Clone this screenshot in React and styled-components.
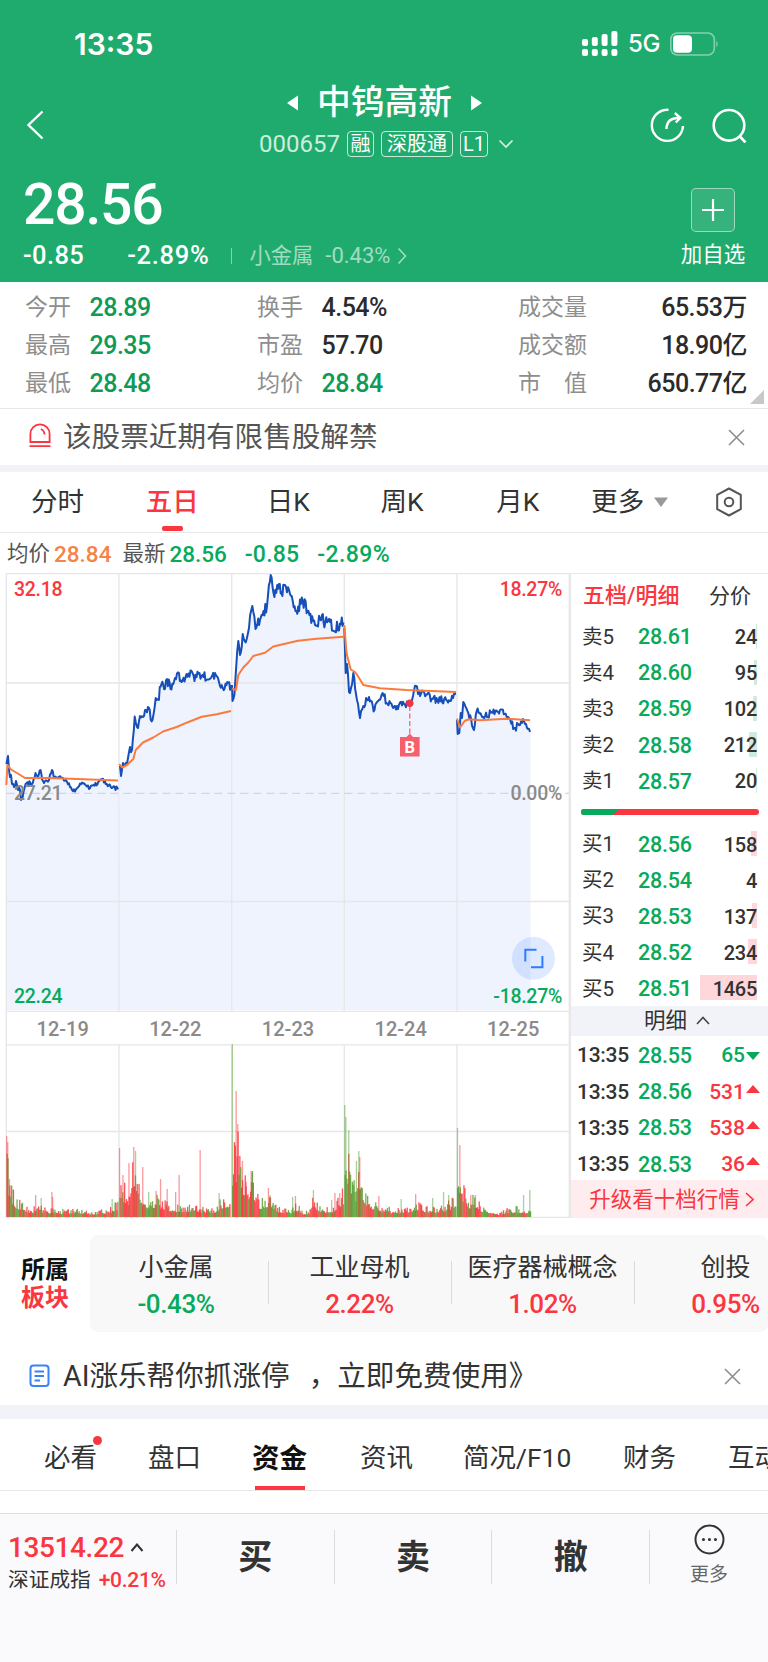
import React from 'react';
import styled, { createGlobalStyle } from 'styled-components';

const colors = {
  header: '#20ab6e',
  green: '#07aa5c',
  red: '#fa3640',
  orange: '#f5834a',
  text: '#333333',
  muted: '#8e8e8e',
  line: '#e8e8e8',
  band: '#f2f3f8',
};

const GlobalStyle = createGlobalStyle`
  * {
    box-sizing: border-box;
  }

  body {
    margin: 0;
    background: #ffffff;
    font-family: Roboto, 'Noto Sans CJK SC', sans-serif;
    line-height: 1;
    color: ${colors.text};
  }

  svg {
    display: block;
    flex: none;
  }
`;

const Screen = styled.div`
  width: 768px;
  height: 1662px;
  overflow: hidden;
  display: flex;
  flex-direction: column;
`;

const Text = styled.span`
  font-size: ${({ $size }) => $size}px;
  font-weight: ${({ $weight }) => $weight || 400};
  color: ${({ $color }) => $color || 'inherit'};
  letter-spacing: ${({ $spacing }) => $spacing || 0}px;
  word-spacing: ${({ $words }) => $words || 0}px;
  margin-left: ${({ $left }) => $left || 0}px;
  white-space: pre;
`;

const IconSlot = styled.span`
  margin-left: ${({ $left }) => $left};
`;

/* header */

const Header = styled.header`
  height: 282px;
  flex: none;
  background: ${colors.header};
  color: #ffffff;
`;

const StatusBar = styled.div`
  height: 88px;
  padding: 0 49px 0 74px;
  display: flex;
  align-items: center;
  justify-content: space-between;
  font-family: Inter, sans-serif;
`;

const StatusIcons = styled.div`
  display: flex;
  align-items: center;
  gap: 10px;
`;

const TitleBar = styled.div`
  height: 74px;
  padding: 0 21px 0 26px;
  display: grid;
  grid-template-columns: 110px 1fr 110px;
  grid-template-rows: 74px;
  align-items: center;
`;

const TitleActions = styled.div`
  display: flex;
  justify-content: flex-end;
  gap: 27px;
`;

const TitleBlock = styled.div`
  align-self: start;
  margin-top: -2px;
  display: flex;
  flex-direction: column;
  align-items: center;
`;

const TitleRow = styled.div`
  height: 34px;
  padding-right: 4px;
  display: flex;
  align-items: center;
  gap: 19px;
`;

const CodeRow = styled.div`
  height: 26px;
  margin-top: 11px;
  display: flex;
  align-items: center;
  gap: 7px;
`;

const Tag = styled.span`
  height: 26px;
  padding: 0 ${({ $pad }) => $pad}px;
  border: 1.5px solid rgba(255, 255, 255, 0.75);
  border-radius: 4px;
  display: flex;
  align-items: center;
  font-size: 20px;
`;

const PriceBlock = styled.div`
  height: 120px;
  padding: 0 23px 0 23px;
  display: flex;
  justify-content: space-between;
`;

const PriceInfo = styled.div`
  padding-top: 14px;
`;

const BigPrice = styled.div`
  height: 55px;
  font-size: 57px;
  font-weight: 500;
  letter-spacing: -1.2px;
`;

const ChangeRow = styled.div`
  height: 26px;
  margin-top: 12px;
  display: flex;
  align-items: center;
`;

const ThinDivider = styled.i`
  width: 1px;
  height: 16px;
  margin: 0 17px 0 22px;
  background: rgba(255, 255, 255, 0.45);
`;

const Watch = styled.div`
  width: 64px;
  padding-top: 26px;
  display: flex;
  flex-direction: column;
  align-items: center;
  gap: 12px;
`;

const PlusBox = styled.div`
  width: 44px;
  height: 44px;
  border: 1.5px solid rgba(255, 255, 255, 0.5);
  border-radius: 5px;
  background: rgba(255, 255, 255, 0.1);
  display: grid;
  place-items: center;
`;

/* quote stats */

const Stats = styled.section`
  height: 127px;
  padding: 7px 21px 6px 25px;
  border-bottom: 1.5px solid ${colors.line};
  flex: none;
  display: grid;
  grid-template-columns: 232px 261px 1fr;
  grid-template-rows: repeat(3, 37.7px);
  position: relative;
`;

const Stat = styled.div`
  display: flex;
  align-items: center;
`;

const StatLabel = styled.span`
  width: ${({ $wide }) => ($wide ? 69 : 46)}px;
  margin-right: ${({ $wide }) => ($wide ? 'auto' : '18.5px')};
  font-size: 23px;
  color: ${colors.muted};
  display: flex;
  justify-content: space-between;
`;

const Corner = styled.i`
  position: absolute;
  right: 4px;
  bottom: 4px;
  border-left: 14px solid transparent;
  border-bottom: 14px solid #c8c8c8;
`;

const Notice = styled.div`
  height: ${({ $height }) => $height}px;
  padding: ${({ $pad }) => $pad};
  flex: none;
  display: flex;
  align-items: center;
`;

const Band = styled.div`
  height: ${({ $height }) => $height}px;
  flex: none;
  background: ${colors.band};
`;

/* period tabs */

const PeriodTabs = styled.nav`
  height: 61px;
  padding: 0 25px 0 31px;
  flex: none;
  border-bottom: 1.5px solid ${colors.line};
  display: flex;
  align-items: stretch;
`;

const Period = styled.div`
  width: ${({ $width }) => $width}px;
  display: flex;
  align-items: center;
  font-size: 26.5px;
  font-weight: ${({ $active }) => ($active ? 500 : 400)};
  color: ${({ $active }) => ($active ? colors.red : colors.text)};
`;

const PeriodName = styled.span`
  height: 100%;
  display: flex;
  align-items: center;
  position: relative;

  &::after {
    content: '';
    display: ${({ $active }) => ($active ? 'block' : 'none')};
    position: absolute;
    left: 16px;
    bottom: 1px;
    width: 21px;
    height: 5px;
    border-radius: 2px;
    background: ${colors.red};
  }
`;

const PriceLine = styled.div`
  height: 40px;
  padding: 2px 0 0 7px;
  flex: none;
  display: flex;
  align-items: center;
`;

const Market = styled.section`
  height: 645px;
  flex: none;
  display: grid;
  grid-template-columns: 570px 198px;
`;

/* order book */

const Book = styled.aside`
  height: 645px;
  border-top: 1.5px solid ${colors.line};
  border-left: 1.5px solid ${colors.line};
`;

const BookHead = styled.div`
  height: 44px;
  padding: 0 17px 0 12px;
  display: flex;
  align-items: center;
  justify-content: space-between;
`;

const BookRow = styled.div`
  height: 36.1px;
  padding: 0 11px 0 11px;
  display: grid;
  grid-template-columns: 56px 60px 1fr;
  align-items: center;

  > span {
    padding-top: 2px;
  }
`;

const Quantity = styled.span`
  height: 25px;
  display: flex;
  align-items: center;
  justify-content: flex-end;
  font-weight: 500;
  font-size: 20px;
  letter-spacing: -0.3px;
  background: linear-gradient(${({ $tint }) => $tint}, ${({ $tint }) => $tint}) right / ${({ $bar }) => $bar}px 100% no-repeat;
`;

const RatioBar = styled.div`
  height: 27px;
  padding: 0 10px 0 10px;
  display: flex;
  align-items: center;
`;

const TradeHead = styled.div`
  height: 30px;
  padding-left: 15px;
  background: ${colors.band};
  display: flex;
  align-items: center;
  justify-content: center;
  gap: 9px;
`;

const TradeRow = styled.div`
  height: 36.1px;
  padding: 0 8px 0 6px;
  display: grid;
  grid-template-columns: 61px 56px 1fr 15px;
  align-items: center;

  > span {
    padding-top: 4px;
  }
`;

const TradeVolume = styled.span`
  text-align: right;
  font-size: 21px;
  font-weight: 500;
  color: ${({ $up }) => ($up ? colors.red : colors.green)};
`;

const TradeArrow = styled.i`
  justify-self: end;
  border: 7px solid transparent;
  border-top: ${({ $up }) => ($up ? '0' : `8px solid ${colors.green}`)};
  border-bottom: ${({ $up }) => ($up ? `8px solid ${colors.red}` : '0')};
  margin-bottom: ${({ $up }) => ($up ? 3 : -4)}px;
`;

const Upgrade = styled.div`
  height: 38px;
  padding-left: 4px;
  background: #feecee;
  color: ${colors.red};
  display: flex;
  align-items: center;
  justify-content: center;
  gap: 5px;
`;

/* sectors */

const SectorRow = styled.section`
  height: 97px;
  margin-top: 17px;
  flex: none;
  display: grid;
  grid-template-columns: 90px 1fr;
`;

const SectorLabel = styled.div`
  padding-left: 21px;
  display: flex;
  flex-direction: column;
  justify-content: center;
  gap: 4px;
`;

const SectorList = styled.div`
  border-radius: 8px;
  background: #f8f8f8;
  overflow: hidden;
  display: flex;
`;

const Sector = styled.div`
  width: 183px;
  padding: 20px 2px 0 0;
  flex: none;
  display: flex;
  flex-direction: column;
  align-items: center;
  gap: 11px;
  background: linear-gradient(#dadada, #dadada) right 26px / 1.5px 43px no-repeat;

  &:first-child {
    width: 179px;
    padding-right: 7px;
  }
`;

/* content tabs */

const ContentTabs = styled.nav`
  height: 72px;
  padding-left: 44px;
  flex: none;
  border-bottom: 1px solid ${colors.line};
  display: flex;
  overflow: hidden;
`;

const ContentTab = styled.div`
  height: 71px;
  width: ${({ $width }) => $width}px;
  flex: none;
  font-size: ${({ $active }) => ($active ? 27.5 : 26.5)}px;
  font-weight: ${({ $active }) => ($active ? 700 : 400)};
  color: ${({ $active }) => ($active ? '#111111' : colors.text)};
`;

const ContentName = styled.span`
  height: 71px;
  width: fit-content;
  padding-top: 8px;
  display: flex;
  align-items: center;
  white-space: nowrap;
  position: relative;

  &::after {
    content: '';
    display: ${({ $active }) => ($active ? 'block' : 'none')};
    position: absolute;
    left: 3px;
    right: 2px;
    bottom: 0;
    height: 4px;
    background: ${colors.red};
  }
`;

const Dot = styled.i`
  position: absolute;
  top: 17px;
  right: -5px;
  width: 9px;
  height: 9px;
  border-radius: 50%;
  background: ${colors.red};
`;

/* bottom bar */

const BottomBar = styled.footer`
  height: 149px;
  margin-top: 22px;
  padding-top: 16px;
  flex: none;
  border-top: 1.5px solid #dfdfe2;
  background: #fafafc;
  display: grid;
  grid-template-columns: 177px repeat(3, 157.7px) 1fr;
  align-items: start;
`;

const BottomCell = styled.div`
  height: 54px;
  border-right: ${({ $last }) => ($last ? '0' : '1.5px solid #dcdcde')};
  display: flex;
  align-items: center;
  justify-content: center;
`;

const IndexCell = styled(BottomCell)`
  padding: 10px 0 0 8px;
  flex-direction: column;
  align-items: flex-start;
  gap: 8px;
`;

const Inline = styled.div`
  display: flex;
  align-items: center;
`;

const MoreCell = styled(BottomCell)`
  padding-bottom: 6px;
  flex-direction: column;
  gap: 10px;
`;

const STATS = [
  ['今开', '28.89', 1], ['换手', '4.54%', 0], ['成交量', '65.53万', 0],
  ['最高', '29.35', 1], ['市盈', '57.70', 0], ['成交额', '18.90亿', 0],
  ['最低', '28.48', 1], ['均价', '28.84', 1], ['市值', '650.77亿', 0],
];

const PERIODS = [
  { name: '分时', width: 115 },
  { name: '五日', width: 121, active: true },
  { name: '日K', width: 114 },
  { name: '周K', width: 116 },
  { name: '月K', width: 95 },
];

const SELL = [
  ['卖5', '28.61', 24, 1],
  ['卖4', '28.60', 95, 3],
  ['卖3', '28.59', 102, 4],
  ['卖2', '28.58', 212, 8],
  ['卖1', '28.57', 20, 1],
];

const BUY = [
  ['买1', '28.56', 158, 6],
  ['买2', '28.54', 4, 0],
  ['买3', '28.53', 137, 5],
  ['买4', '28.52', 234, 9],
  ['买5', '28.51', 1465, 57],
];

const TRADES = [
  ['13:35', '28.55', 65, false],
  ['13:35', '28.56', 531, true],
  ['13:35', '28.53', 538, true],
  ['13:35', '28.53', 36, true],
];

const SECTORS = [
  ['小金属', '-0.43%'],
  ['工业母机', '2.22%'],
  ['医疗器械概念', '1.02%'],
  ['创投', '0.95%'],
];

const CONTENT_TABS = [
  { name: '必看', width: 104, dot: true },
  { name: '盘口', width: 104 },
  { name: '资金', width: 108, active: true },
  { name: '资讯', width: 103 },
  { name: '简况/F10', width: 160 },
  { name: '财务', width: 105 },
  { name: '互动', width: 60 },
];

const DAY_X = [6.3, 119, 231.7, 344.3, 457, 569.3];
const DATES = ['12-19', '12-22', '12-23', '12-24', '12-25'];

const PRICE = [
  [[6.5, 764], [8, 756], [9, 770], [10, 777], [11, 775], [12, 784], [14, 787], [16, 781], [18, 790], [20, 790], [21, 800], [23.5, 792], [26.7, 783], [32, 784], [35.5, 773], [38, 777], [40.5, 770], [43, 781], [49, 780], [52, 770], [53.5, 776], [61, 778], [66, 780], [70, 787], [75, 791.5], [82, 782.5], [90, 788], [102, 780], [111.5, 788], [118.5, 788]],
  [[120, 766], [121, 776], [123, 763], [128, 758], [130, 747], [132, 750], [134.7, 716.5], [137, 727], [140, 716], [143, 717], [148, 707], [152.5, 720], [155.7, 698], [158, 699], [161.5, 684], [165, 689], [167, 679], [170.5, 689], [175, 678], [179, 673], [181.5, 682], [186.5, 674], [191.5, 671], [194.5, 681], [199.5, 673], [203.5, 677], [218, 678], [220, 686], [231, 685]],
  [[232, 685], [232.5, 701], [234.5, 694], [236, 670], [238.3, 641], [240, 655], [242.7, 634], [246.7, 639], [249, 628], [252.3, 606], [255.5, 629], [260, 620], [263.5, 611], [267, 606], [270.7, 575], [273.5, 593], [279, 584], [281.5, 592], [285, 585], [290, 594], [295.5, 611], [302.7, 601], [308.5, 611], [315, 625], [322, 615], [323.5, 622], [330, 622], [334, 631], [340, 623.5], [343.5, 622.5]],
  [[344.3, 628], [345.7, 673], [347, 664], [349, 692], [351, 688], [353.3, 673], [356, 694], [360, 718], [363.3, 706], [369, 697], [374.5, 710], [382.7, 693], [386.7, 703], [395, 706], [404, 704], [409.7, 703], [413, 696], [416, 686], [420, 696], [423.3, 691], [431.7, 699], [450, 701], [454, 694], [456, 694]],
  [[457, 720], [457.7, 734], [459.3, 733], [460.7, 713], [462, 718], [463.3, 702], [468.3, 713], [474, 730], [476.7, 711], [483.3, 717], [491.7, 712], [500, 710], [506.7, 717], [515, 728], [524, 721], [530, 732]],
];

const AVERAGE = [
  '6.3,785 7.5,765 11,769.5 17,773 25,778 50,778 77,779 118,780.5',
  '119.3,764 122,767.5 127,765 133.3,759 135.7,750 143,742.5 153.3,737.5 163,731.5 176.7,727 186.7,722.7 201.7,716.7 216.7,714.3 231,711',
  '232,688.5 236,690 238.3,675 243.3,667.5 248.3,662.5 253.3,656 265,652.7 273.3,646.5 284,644 298,640.7 316.7,638.7 344,636.7',
  '344.3,625 346.5,653 350.7,669.5 355,672 358.3,676.7 363.3,685 380,688.3 406.7,690 456,692',
  '457,718.7 460,727.3 465,720.7 469,719.3 480,720.3 506.7,718.7 530,720.3',
];

// volume envelope: x, height, share of falling minutes
const VOLUME = [
  [[6.5, 70, 0.3], [9, 34, 0.7], [12, 26, 0.7], [15, 18, 0.7], [20, 13, 0.6], [30, 8, 0.5], [38, 10, 0.6], [45, 8, 0.6], [60, 6, 0.5], [75, 8, 0.6], [90, 4, 0.3], [105, 7, 0.4], [112, 9, 0.3], [118, 15, 0.4]],
  [[119.5, 38, 0.6], [123, 30, 0.4], [127, 22, 0.4], [131, 40, 0.1], [134.5, 66, 0.2], [137, 34, 0.4], [145, 18, 0.5], [155, 18, 0.5], [168, 12, 0.4], [180, 9, 0.5], [195, 11, 0.4], [205, 8, 0.5], [215, 8, 0.4], [222, 18, 0.5], [230, 20, 0.4]],
  [[232, 60, 0.5], [235, 60, 0.2], [237.5, 92, 0.2], [242, 48, 0.3], [248, 26, 0.5], [252, 38, 0.4], [258, 15, 0.5], [268, 20, 0.4], [275, 10, 0.4], [290, 7, 0.6], [296, 12, 0.4], [302, 5, 0.3], [308, 5, 0.4], [313, 18, 0.4], [320, 8, 0.4], [332, 9, 0.4], [343, 24, 0.5]],
  [[344.5, 85, 0.9], [348, 55, 0.6], [352, 36, 0.5], [356, 30, 0.7], [359, 50, 0.6], [364, 26, 0.4], [370, 16, 0.6], [380, 11, 0.3], [392, 7, 0.6], [405, 7, 0.3], [416, 14, 0.4], [428, 8, 0.6], [440, 9, 0.4], [450, 14, 0.3], [456, 22, 0.6]],
  [[457, 60, 0.8], [460, 42, 0.3], [465, 20, 0.4], [470, 17, 0.7], [476, 19, 0.5], [482, 9, 0.6], [492, 7, 0.4], [498, 3, 0.2], [506, 7, 0.5], [516, 9, 0.6], [525, 7, 0.4], [530, 10, 0.8]],
];

const SPIKES = [
  [6.5, 81, 'r'], [7.6, 75, 'r'], [9.3, 38, 'r'], [13, 28, 'g'], [35.5, 22, 'r'], [41, 19, 'g'], [51.7, 25, 'r'], [52.5, 20, 'r'], [112, 18, 'g'],
  [119.4, 69, 'r'], [122.8, 42, 'r'], [128.8, 54, 'r'], [133.6, 70, 'r'], [135.4, 66, 'g'], [142.6, 50, 'r'], [148.5, 25, 'g'], [156, 26, 'r'], [160.4, 38, 'r'], [167, 28, 'r'], [175.5, 25, 'r'], [179, 42, 'r'], [200, 67, 'r'], [219, 24, 'g'],
  [232.2, 173, 'g'], [236, 126, 'r'], [237.6, 93, 'r'], [242.3, 56, 'r'], [246, 35, 'r'], [251, 46, 'r'], [252, 44, 'g'], [268.3, 29, 'r'], [270, 22, 'g'], [292.5, 20, 'g'], [295.3, 21, 'r'], [313.3, 27, 'g'], [331.5, 17, 'g'], [334.8, 24, 'r'], [339.6, 24, 'r'],
  [344.6, 112, 'g'], [345.7, 100, 'g'], [348.6, 87, 'g'], [356.3, 56, 'g'], [358.7, 66, 'g'], [359.6, 60, 'r'], [378.7, 21, 'r'], [401, 18, 'g'], [415.5, 23, 'r'], [432.5, 19, 'g'], [443.4, 25, 'g'], [448.5, 22, 'g'],
  [457.3, 89, 'g'], [459.7, 72, 'r'], [470.6, 22, 'r'], [475.3, 22, 'r'], [523.4, 22, 'g'], [529.7, 27, 'g'],
];

const random = (seed) => {
  const value = Math.sin(seed * 12.9898 + 4.137) * 43758.5453;
  return value - Math.floor(value);
};

const sample = (points, x, column) => {
  const next = points.findIndex((p) => p[0] >= x);
  if (next <= 0) return points[next === 0 ? 0 : points.length - 1][column];
  const a = points[next - 1];
  const b = points[next];
  return a[column] + ((b[column] - a[column]) * (x - a[0])) / (b[0] - a[0]);
};

// minute ticks between the turning points of a day
const ticks = (points, day) => {
  const noise = [2.4, 5, 6, 3.8, 3.8][day];
  const out = [];
  for (let i = 0; i < points.length - 1; i += 1) {
    const [x1, y1] = points[i];
    const [x2, y2] = points[i + 1];
    const steps = Math.max(1, Math.round((x2 - x1) / 0.95));
    for (let s = 0; s < steps; s += 1) {
      const x = x1 + ((x2 - x1) * s) / steps;
      const jitter = s === 0 ? 0 : (random(x) - 0.5) * 2 * noise;
      out.push([x, y1 + ((y2 - y1) * s) / steps + jitter]);
    }
  }
  out.push(points[points.length - 1]);
  return out.map(([x, y]) => `${x.toFixed(1)},${y.toFixed(1)}`).join(' ');
};

const volumeBars = () => {
  const bars = [];
  VOLUME.forEach((points) => {
    const end = points[points.length - 1][0];
    for (let x = points[0][0]; x <= end; x += 0.9) {
      const r = random(x * 3.1);
      bars.push({
        x,
        height: Math.max(2, sample(points, x, 1) * (0.48 + 0.8 * r * r)),
        fill: random(x * 7.7) < sample(points, x, 2) ? '#57a033' : '#fb343c',
      });
    }
  });
  return bars;
};

const Chart = () => (
  <svg width="570" height="645" viewBox="0 573 570 645" fontFamily="Roboto, sans-serif">
    {PRICE.map((points, day) => {
      const right = day === 4 ? 530.5 : DAY_X[day + 1];
      return (
        <polygon
          key={day}
          fill="#eff3fe"
          points={`${DAY_X[day]},1010 ${ticks(points, day)} ${right},${points[points.length - 1][1]} ${right},1010`}
        />
      );
    })}
    <g stroke="#e5e6e8" strokeWidth="1.3" fill="none">
      <path d="M6.3 573.6H570M6.3 683H569M6.3 901.5H569M6.3 1011.3H569M6.3 1044.8H569M6.3 1131.5H569M6.3 1217.4H569" />
      {DAY_X.map((x, i) => (
        <path key={x} d={i === 0 || i === 5 ? `M${x} 573V1218` : `M${x} 573V1011M${x} 1045V1218`} />
      ))}
    </g>
    <path d="M6.3 793.3H569" stroke="#cbd8e6" strokeWidth="1.2" strokeDasharray="8 5" />
    {volumeBars().map((bar) => (
      <rect key={bar.x} x={bar.x} y={1217 - bar.height} width="1.3" height={bar.height} fill={bar.fill} opacity="0.85" />
    ))}
    {SPIKES.map(([x, height, kind]) => (
      <rect key={x} x={x - 0.5} y={1217 - height} width="1.3" height={height} fill={kind === 'g' ? '#57a033' : '#fb343c'} opacity="0.5" />
    ))}
    {PRICE.map((points, day) => (
      <polyline key={day} points={ticks(points, day)} fill="none" stroke="#164fb9" strokeWidth="2" strokeLinejoin="round" />
    ))}
    {AVERAGE.map((points) => (
      <polyline key={points} points={points} fill="none" stroke="#fb7a3d" strokeWidth="2" strokeLinejoin="round" />
    ))}
    <g fontSize="19.5" fontWeight="500" letterSpacing="-0.3">
      <text x="14" y="596" fill={colors.red}>32.18</text>
      <text x="562" y="596" fill={colors.red} textAnchor="end">18.27%</text>
      <text x="14" y="800" fill="#8a8a8a">27.21</text>
      <text x="562" y="800" fill="#8a8a8a" textAnchor="end">0.00%</text>
      <text x="14" y="1003" fill={colors.green}>22.24</text>
      <text x="562" y="1003" fill={colors.green} textAnchor="end">-18.27%</text>
    </g>
    <path d="M409.8 706V735" stroke="#f45a68" strokeWidth="1.2" strokeDasharray="5 2.5" />
    <circle cx="409.8" cy="703.3" r="3.7" fill="#f53443" />
    <path d="M400 737H406.5L409.8 733.5L413 737H419.6V756.5H400Z" fill="#f65f6c" />
    <text x="409.8" y="753" textAnchor="middle" fontSize="16.5" fontWeight="700" fill="#ffffff">B</text>
    <circle cx="533.5" cy="958.3" r="21.5" fill="#3a7cff" fillOpacity="0.16" />
    <path d="M525.3 961.5V949.8H536.5M531 967.2H542.4V956" fill="none" stroke="#2e7cff" strokeWidth="2" />
    <g fontSize="20" fontWeight="500" fill="#8a8a8a" textAnchor="middle">
      {DATES.map((date, i) => (
        <text key={date} x={(DAY_X[i] + DAY_X[i + 1]) / 2} y="1036">{date}</text>
      ))}
    </g>
  </svg>
);

const SignalIcon = () => (
  <svg width="36" height="26" viewBox="0 0 36 26" fill="#ffffff">
    {[8, 6, 3, 0].map((top, i) => (
      <React.Fragment key={top}>
        <rect x={i * 9.8} y={top} width="6" height={15 - top} rx="2" />
        <rect x={i * 9.8} y="18" width="6" height="7" rx="2" />
      </React.Fragment>
    ))}
  </svg>
);

const BatteryIcon = () => (
  <svg width="49" height="24" viewBox="0 0 49 24">
    <rect x="0.8" y="1" width="43.5" height="22" rx="6.5" fill="none" stroke="#ffffff" strokeOpacity="0.45" strokeWidth="1.6" />
    <rect x="3" y="3.2" width="19" height="17.5" rx="4" fill="#ffffff" />
    <path d="M46.4 8.5q2.4 3.5 0 7z" fill="#ffffff" fillOpacity="0.5" />
  </svg>
);

const CloseIcon = () => (
  <svg width="17" height="17" viewBox="0 0 17 17" stroke="#8a8a8a" strokeWidth="1.5">
    <path d="M1 1L16 16M16 1L1 16" />
  </svg>
);

const Chevron = ({ d, width, height, color, stroke = 1.6 }) => (
  <svg width={width} height={height} viewBox={`0 0 ${width} ${height}`} fill="none" stroke={color} strokeWidth={stroke}>
    <path d={d} />
  </svg>
);

const OrderRows = ({ rows, tint }) =>
  rows.map(([name, price, quantity, bar]) => (
    <BookRow key={name}>
      <Text $size={20.5}>{name}</Text>
      <Text $size={21.5} $weight={500} $color={colors.green} $spacing={-0.2}>{price}</Text>
      <Quantity $tint={tint} $bar={bar}>{quantity}</Quantity>
    </BookRow>
  ));

const App = () => (
  <Screen>
    <GlobalStyle />
    <Header>
      <StatusBar>
        <Text $size={30} $weight={600}>13:35</Text>
        <StatusIcons>
          <SignalIcon />
          <Text $size={24} $weight={500} $spacing={-0.4}>5G</Text>
          <BatteryIcon />
        </StatusIcons>
      </StatusBar>
      <TitleBar>
        <Chevron width={18} height={30} d="M16.5 1.5L2.5 15L16.5 28.5" color="#ffffff" stroke={2.4} />
        <TitleBlock>
          <TitleRow>
            <svg width="11" height="16" viewBox="0 0 11 16" fill="#ffffff"><path d="M11 0.5V15.5L0 8Z" /></svg>
            <Text $size={33.7} $weight={500}>中钨高新</Text>
            <svg width="11" height="16" viewBox="0 0 11 16" fill="#ffffff"><path d="M0 0.5V15.5L11 8Z" /></svg>
          </TitleRow>
          <CodeRow>
            <Text $size={24} $color="#cdeede">000657</Text>
            <Tag $pad={2.5}>融</Tag>
            <Tag $pad={5}>深股通</Tag>
            <Tag $pad={2}>L1</Tag>
            <IconSlot $left="3px">
              <Chevron width={16} height={10} d="M1.5 1.5L8 8L14.5 1.5" color="#d8f1e5" />
            </IconSlot>
          </CodeRow>
        </TitleBlock>
        <TitleActions>
          <svg width="35" height="35" viewBox="0 0 35 35" fill="none" stroke="#ffffff" strokeWidth="2.4">
            <path d="M18.5 1.7H17A15.6 15.6 0 1 0 33 18" />
            <path d="M16.5 21C16.5 13.5 21 9.8 30 9.8M24.8 5L30.3 9.8L25.8 14.5" />
          </svg>
          <svg width="35" height="35" viewBox="0 0 35 35" fill="none" stroke="#ffffff" strokeWidth="2.6">
            <circle cx="17" cy="17.3" r="15.3" />
            <path d="M27 27.5L33.5 34.5" />
          </svg>
        </TitleActions>
      </TitleBar>
      <PriceBlock>
        <PriceInfo>
          <BigPrice>28.56</BigPrice>
          <ChangeRow>
            <Text $size={25.5} $weight={500} $spacing={0.4}>-0.85</Text>
            <Text $size={25.5} $weight={500} $spacing={0.7} $left={43}>-2.89%</Text>
            <ThinDivider />
            <Text $size={21.3} $color="#a0dcc1">小金属</Text>
            <Text $size={22} $color="#a0dcc1" $left={12}>-0.43%</Text>
            <IconSlot $left="7px">
              <Chevron width={10} height={18} d="M1.5 1.5L8.5 9L1.5 16.5" color="#a0dcc1" />
            </IconSlot>
          </ChangeRow>
        </PriceInfo>
        <Watch>
          <PlusBox>
            <svg width="22" height="22" viewBox="0 0 22 22" stroke="#ffffff" strokeWidth="2.2"><path d="M11 0V22M0 11H22" /></svg>
          </PlusBox>
          <Text $size={21.5}>加自选</Text>
        </Watch>
      </PriceBlock>
    </Header>

    <Stats>
      {STATS.map(([label, value, down], i) => (
        <Stat key={label}>
          <StatLabel $wide={i % 3 === 2}>
            {label.length === 2 ? [...label].map((c) => <span key={c}>{c}</span>) : label}
          </StatLabel>
          <Text $size={25} $weight={500} $spacing={-0.5} $color={down ? '#0e9a57' : '#2b2b2b'}>{value}</Text>
        </Stat>
      ))}
      <Corner />
    </Stats>

    <Notice $height={56} $pad="0 23px 0 28px">
      <svg width="24" height="28" viewBox="0 0 24 28" fill="none" stroke={colors.red} strokeWidth="1.8">
        <path d="M2.4 19V11A9.6 9.6 0 0 1 21.6 11V19ZM1.5 23.2H22.5M12.8 6Q16.3 7.5 16.6 11.5" />
      </svg>
      <Text $size={28.6} $left={11} $color="#555555">该股票近期有限售股解禁</Text>
      <IconSlot $left="auto"><CloseIcon /></IconSlot>
    </Notice>
    <Band $height={7} />

    <PeriodTabs>
      {PERIODS.map(({ name, width, active }) => (
        <Period key={name} $width={width} $active={active}>
          <PeriodName $active={active}>{name}</PeriodName>
        </Period>
      ))}
      <Period $width={124}>
        更多
        <IconSlot $left="10px">
          <svg width="14" height="10" viewBox="0 0 14 10" fill="#999999"><path d="M0 0.5H14L7 10Z" /></svg>
        </IconSlot>
      </Period>
      <Period $width={28}>
        <svg width="28" height="30" viewBox="0 0 28 30" fill="none" stroke="#555555" strokeWidth="2" strokeLinejoin="round">
          <path d="M14 1.5L25.8 7.8V22.2L14 28.5L2.2 22.2V7.8Z" />
          <circle cx="14" cy="15" r="4.3" />
        </svg>
      </Period>
    </PeriodTabs>

    <PriceLine>
      <Text $size={21.5} $color="#555555">均价</Text>
      <Text $size={22.5} $weight={500} $color={colors.orange} $left={4}>28.84</Text>
      <Text $size={21.5} $color="#555555" $left={11}>最新</Text>
      <Text $size={22.5} $weight={500} $color={colors.green} $left={4}>28.56</Text>
      <Text $size={23} $weight={500} $color={colors.green} $left={18} $spacing={0.2}>-0.85</Text>
      <Text $size={23} $weight={500} $color={colors.green} $left={18} $spacing={0.4}>-2.89%</Text>
    </PriceLine>

    <Market>
      <Chart />
      <Book>
        <BookHead>
          <Text $size={22} $weight={500} $color={colors.red}>五档/明细</Text>
          <Text $size={21}>分价</Text>
        </BookHead>
        <OrderRows rows={SELL} tint="#cfebdd" />
        <RatioBar>
          <svg width="178" height="6" viewBox="0 0 178 6">
            <rect width="178" height="6" rx="3" fill={colors.red} />
            <path d="M3 0H39L31 6H3A3 3 0 0 1 3 0Z" fill={colors.green} />
          </svg>
        </RatioBar>
        <OrderRows rows={BUY} tint="#fdd7da" />
        <TradeHead>
          <Text $size={21.5}>明细</Text>
          <Chevron width={14} height={9} d="M1 8L7 1.5L13 8" color="#444444" />
        </TradeHead>
        {TRADES.map(([time, price, volume, up], i) => (
          <TradeRow key={i}>
            <Text $size={21} $weight={500} $spacing={-0.3}>{time}</Text>
            <Text $size={21.5} $weight={500} $color={colors.green} $spacing={-0.2}>{price}</Text>
            <TradeVolume $up={up}>{volume}</TradeVolume>
            <TradeArrow $up={up} />
          </TradeRow>
        ))}
        <Upgrade>
          <Text $size={21.5}>升级看十档行情</Text>
          <Chevron width={9} height={15} d="M1 1L8 7.5L1 14" color={colors.red} />
        </Upgrade>
      </Book>
    </Market>

    <SectorRow>
      <SectorLabel>
        <Text $size={24} $weight={700} $color="#111111">所属</Text>
        <Text $size={24} $weight={700} $color={colors.red}>板块</Text>
      </SectorLabel>
      <SectorList>
        {SECTORS.map(([name, change]) => (
          <Sector key={name}>
            <Text $size={25}>{name}</Text>
            <Text $size={26} $weight={500} $spacing={-0.4} $color={change[0] === '-' ? colors.green : colors.red}>{change}</Text>
          </Sector>
        ))}
      </SectorList>
    </SectorRow>

    <Notice $height={73} $pad="16px 27px 0 29px">
      <svg width="21" height="26" viewBox="0 0 21 26" fill="none" stroke="#3b82f6" strokeWidth="2">
        <rect x="1.5" y="1.5" width="18" height="20.5" rx="3" />
        <path d="M5.5 7.5H15M5.5 12H15M5.5 16.5H11" />
      </svg>
      <Text $size={28.6} $left={13} $words={12}>AI涨乐帮你抓涨停 ，立即免费使用》</Text>
      <IconSlot $left="auto"><CloseIcon /></IconSlot>
    </Notice>
    <Band $height={14} />

    <ContentTabs>
      {CONTENT_TABS.map(({ name, width, active, dot }) => (
        <ContentTab key={name} $width={width} $active={active}>
          <ContentName $active={active}>
            {name}
            {dot && <Dot />}
          </ContentName>
        </ContentTab>
      ))}
    </ContentTabs>

    <BottomBar>
      <IndexCell>
        <Inline>
          <Text $size={28} $weight={500} $color={colors.red} $spacing={-0.4}>13514.22</Text>
          <IconSlot $left="6px">
            <Chevron width={14} height={9} d="M1.5 8L7 1.5L12.5 8" color="#333333" stroke={2} />
          </IconSlot>
        </Inline>
        <Inline>
          <Text $size={20.7}>深证成指</Text>
          <Text $size={21} $weight={500} $color={colors.red} $left={8} $spacing={-0.3}>+0.21%</Text>
        </Inline>
      </IndexCell>
      {['买', '卖', '撤'].map((action) => (
        <BottomCell key={action}>
          <Text $size={34} $weight={600}>{action}</Text>
        </BottomCell>
      ))}
      <MoreCell $last>
        <svg width="31" height="31" viewBox="0 0 31 31" fill="none" stroke="#333333" strokeWidth="2">
          <circle cx="15.5" cy="15.5" r="14" />
          <path d="M9.4 15.5h.1M15.4 15.5h.1M21.4 15.5h.1" strokeWidth="3" strokeLinecap="round" />
        </svg>
        <Text $size={19} $color="#666666">更多</Text>
      </MoreCell>
    </BottomBar>
  </Screen>
);

export default App;
